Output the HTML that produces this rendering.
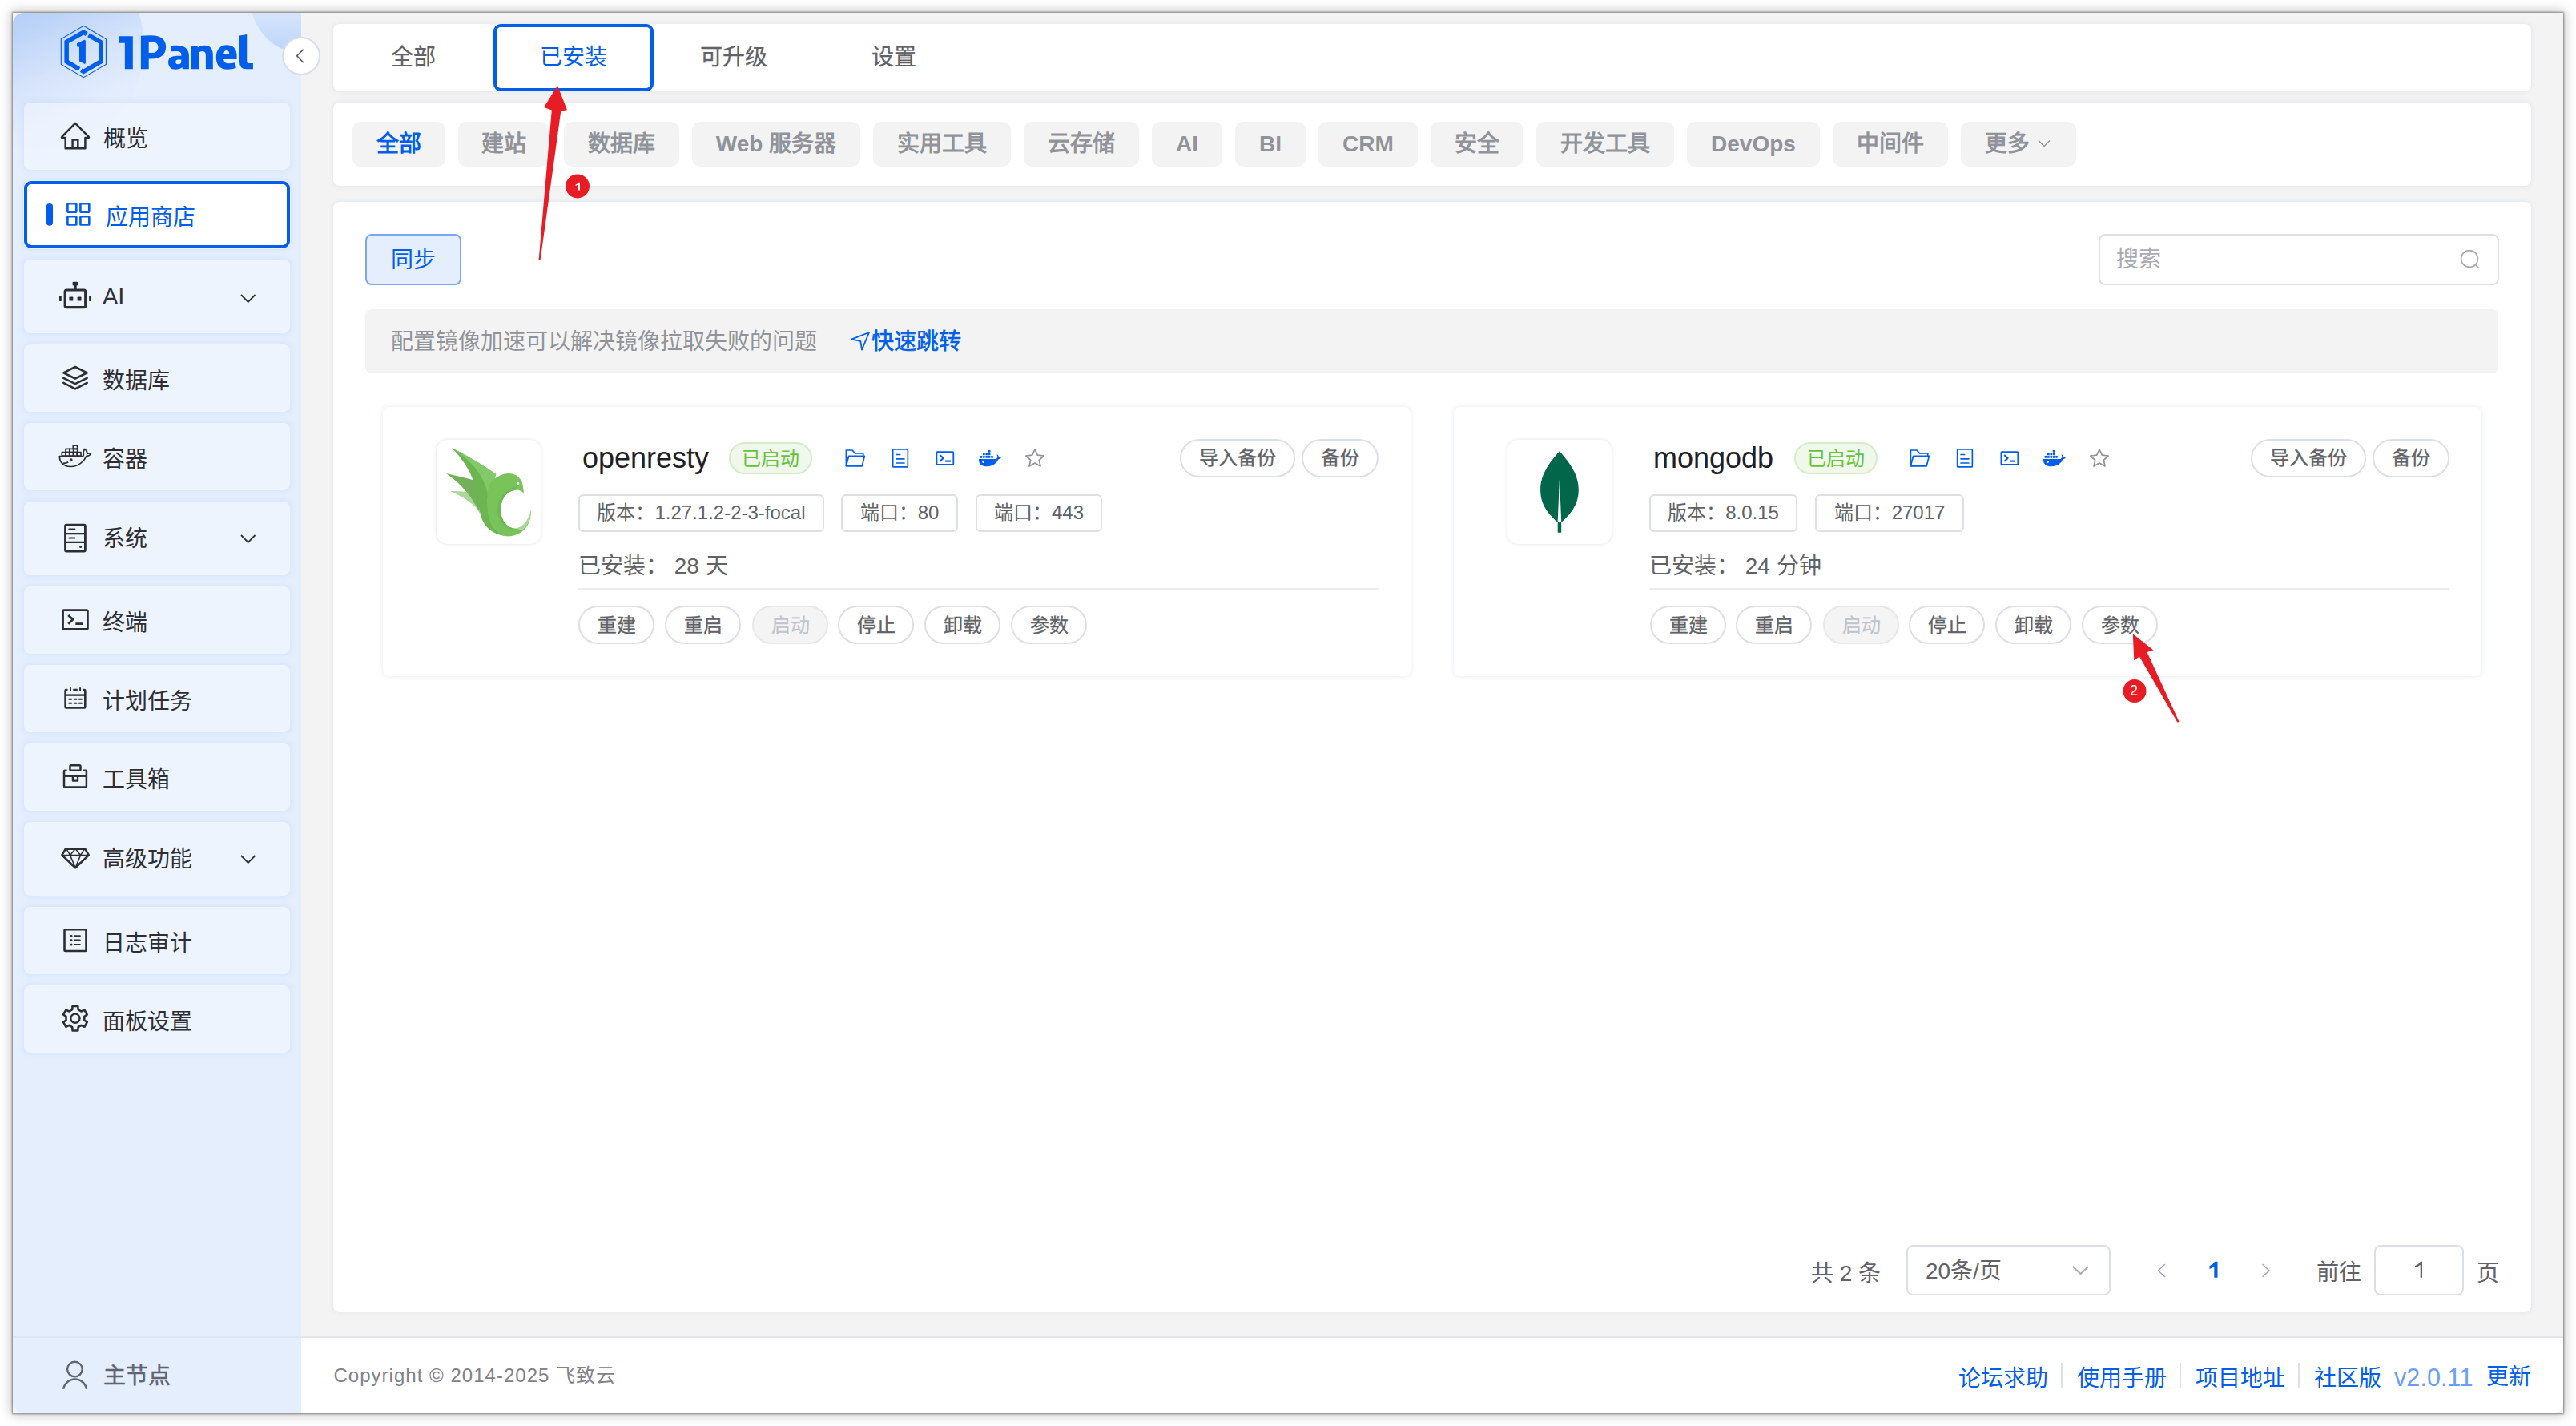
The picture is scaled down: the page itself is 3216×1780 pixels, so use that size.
<!DOCTYPE html>
<html lang="zh-CN">
<head>
<meta charset="utf-8">
<style>
*{box-sizing:border-box;margin:0;padding:0}
html,body{width:3216px;height:1780px;overflow:hidden;background:#fff}
body{position:relative;font-family:"Liberation Sans",sans-serif;color:#303133}
.a{position:absolute}
.t{position:absolute;white-space:nowrap;line-height:1}
#win{left:16px;top:16px;width:3184px;height:1748px;background:#f3f3f3;box-shadow:0 0 2px 1px rgba(0,0,0,.42),0 0 14px 2px rgba(0,0,0,.24);border-radius:0}
#side{left:16px;top:16px;width:360px;height:1748px;background:#e4eefd;border-radius:14px 0 0 14px;overflow:hidden}
.mi{position:absolute;left:30px;width:332px;border-radius:8px;background:rgba(255,255,255,.35);box-shadow:0 0 8px rgba(120,160,230,.18)}
.mt{position:absolute;left:128px;font-size:28px;line-height:1;color:#2c2e33;white-space:nowrap}
.ic{position:absolute;left:68px;width:50px;height:50px;overflow:visible}
.chev{position:absolute;left:298px;width:22px;height:14px}
.card{position:absolute;background:#fff;border-radius:8px;box-shadow:0 0 7px rgba(60,100,190,.10)}
.pill{position:absolute;top:152px;height:56px;border-radius:10px;background:#f3f3f4;padding-bottom:6px;font-size:28px;font-weight:bold;color:#909399;display:flex;align-items:center;justify-content:center;white-space:nowrap}
.btn{position:absolute;border:2px solid #dcdfe6;border-radius:24px;background:#fff;color:#606266;font-size:24px;display:flex;align-items:center;justify-content:center;white-space:nowrap;padding-bottom:4px;-webkit-text-stroke-width:0.3px}
.tagb{position:absolute;top:616.5px;height:47px;padding-bottom:6px;border:2px solid #dcdfe6;border-radius:6px;background:#fff;color:#606266;font-size:24px;display:flex;align-items:center;justify-content:center;white-space:nowrap}
</style>
</head>
<body>
<div id="win" class="a"></div>

<!-- SIDEBAR -->
<div id="side" class="a">
  <div class="a" style="left:-96px;top:-88px;width:260px;height:260px;border-radius:50%;background:linear-gradient(155deg,#a8c5f5 18%,#bcd3f8 42%,#d5e3fb 60%,#e2ecfd 76%,#e4eefd 90%)"></div>
  <div class="a" style="left:297px;top:-83px;width:134px;height:134px;border-radius:50%;background:linear-gradient(180deg,#e4eefd 40%,#bcd4f8 100%)"></div>
</div>

<!-- logo -->
<svg class="a" style="left:70px;top:28px" width="70" height="72" viewBox="0 0 70 72">
  <polygon points="34.3,4.3 62.4,20.7 62.4,52.5 34.3,68.7 6.3,52.5 6.3,20.7" fill="none" stroke="#0a5ce8" stroke-width="1.1"/>
  <path d="M39.68,12.20 L34.30,9.10 L10.40,22.70 L10.40,50.50 L27.63,60.66 L30.43,55.91 L15.92,47.35 L15.92,25.97 L34.30,15.51 L36.91,17.01 Z" fill="#005eeb"/>
  <path d="M41.94,13.50 L58.80,23.20 L58.80,50.50 L34.30,64.60 L29.95,62.04 L32.76,57.28 L34.30,58.19 L53.14,47.35 L53.14,26.35 L39.17,18.31 Z" fill="#005eeb"/>
  <path d="M26,26.3 L35.4,21.7 Q36.9,21.9 36.9,23.2 L36.9,50.5 Q36.9,52 35.4,51.8 L29,48.5 L29,30.8 L26,30.3 Z" fill="#005eeb"/>
</svg>
<svg class="a" style="left:140px;top:36px" width="190" height="60" viewBox="0 0 190 60" fill="#005eeb">
  <path d="M8.85,9.2 L25.8,9.2 L25.8,50.2 L15.86,50.2 L15.86,17.7 L8.85,17.7 Z"/>
  <path fill-rule="evenodd" d="M35.9,50.2 L35.9,8.8 Q40,8.3 48,8.3 Q58,8.3 63,12.5 Q67.1,16 67.1,23 Q67.1,30 62,34 Q57,37.6 48,37.6 L45.7,37.6 L45.7,50.2 Z M45.7,15.9 L48,15.9 Q57.5,15.9 57.5,23 Q57.5,30.1 49,30.1 L45.7,30.1 Z"/>
  <path fill-rule="evenodd" d="M73.8,21 L80,20.8 Q88,20.8 92,24 Q95.9,27.5 95.9,34 L95.9,50.2 L87.8,50.2 L87.6,48 Q84.5,50.8 79,50.8 Q74.5,50.8 72.2,48.3 Q70,45.8 70,42 Q70,37.5 73,35.5 Q76,33.8 81,33.8 L86.3,33.8 L86.3,31.5 Q86.3,28 80,28 L73.5,28.3 Z M86.3,38.5 L82,38.5 Q79.3,38.5 79.3,41.5 Q79.3,44.3 82,44.3 Q86.3,44.3 86.3,41 Z"/>
  <path d="M99,50.2 L99,21.3 L106.5,21.3 L106.8,23.5 Q109.5,20.65 115,20.65 Q120.5,20.65 123.2,23.8 Q125.8,27 125.8,33 L125.8,50.2 L116.9,50.2 L116.9,33 Q116.9,28 112.5,28 Q110,28 108,29.5 L108,50.2 Z"/>
  <path fill-rule="evenodd" d="M155.6,38 L139,38 Q139.5,43.2 145,43.2 Q149,43.2 153.7,42.2 L154.7,48.9 Q150,50.7 144,50.7 Q137,50.7 133.4,46.8 Q129.8,43 129.8,35.5 Q129.8,28 133.5,24.2 Q137.3,20.3 143,20.3 Q149,20.3 152.3,23.8 Q155.6,27.3 155.6,34 Z M139,32.1 L146.4,32.1 Q146.2,26.9 142.8,26.9 Q139.3,26.9 139,32.1 Z"/>
  <path d="M159,8.5 L168.2,7 L168.2,41 Q168.2,43.1 170.5,43.1 L175.9,43.1 L175.9,50.2 L168,50.2 Q163,50.2 161,48 Q159,45.8 159,41 Z"/>
</svg>

<!-- collapse btn -->
<div class="a" style="left:352px;top:46px;width:48px;height:48px;border-radius:50%;background:#fff;border:2px solid #dadee6"></div>
<svg class="a" style="left:367px;top:60px" width="20" height="22" viewBox="0 0 20 22"><polyline points="11.8,1.7 3.7,9.8 11.8,18.3" fill="none" stroke="#52565e" stroke-width="1.6"/></svg>

<!-- MENU ITEMS -->
<div class="mi" style="top:128px;height:84px"></div>
<div class="mi" style="top:226px;height:84px;background:#fff;border:4px solid #005eeb;border-radius:9px;box-shadow:0 0 0 1px rgba(255,255,255,.5),0 0 6px rgba(120,160,230,.25)"></div>
<div class="mi" style="top:324px;height:92px"></div>
<div class="mi" style="top:430px;height:84px"></div>
<div class="mi" style="top:528px;height:84px"></div>
<div class="mi" style="top:626px;height:92px"></div>
<div class="mi" style="top:732px;height:84px"></div>
<div class="mi" style="top:830px;height:84px"></div>
<div class="mi" style="top:928px;height:84px"></div>
<div class="mi" style="top:1026px;height:92px"></div>
<div class="mi" style="top:1132px;height:84px"></div>
<div class="mi" style="top:1230px;height:84px"></div>

<!-- menu texts -->
<div class="mt" style="top:159.5px;left:129px">概览</div>
<div class="mt" style="top:258px;left:132px;color:#005eeb">应用商店</div>
<div class="mt" style="top:355.5px;font-size:29px">AI</div>
<div class="mt" style="top:462px">数据库</div>
<div class="mt" style="top:560px">容器</div>
<div class="mt" style="top:659px">系统</div>
<div class="mt" style="top:764px">终端</div>
<div class="mt" style="top:862px">计划任务</div>
<div class="mt" style="top:960px">工具箱</div>
<div class="mt" style="top:1058.5px">高级功能</div>
<div class="mt" style="top:1164px">日志审计</div>
<div class="mt" style="top:1262px">面板设置</div>

<!-- MAIN -->
<div class="card" style="left:416px;top:30px;width:2744px;height:84px"></div>
<div class="card" style="left:416px;top:128px;width:2744px;height:104px"></div>
<div class="card" style="left:416px;top:252px;width:2744px;height:1386px"></div>

<!-- top tabs -->
<div class="t" style="left:488px;top:58px;font-size:28px;color:#606266;-webkit-text-stroke-width:0.25px">全部</div>
<div class="a" style="left:616px;top:30px;width:200px;height:84px;border:4px solid #005eeb;border-radius:9px"></div>
<div class="t" style="left:674px;top:58px;font-size:28px;color:#005eeb">已安装</div>
<div class="t" style="left:874px;top:58px;font-size:28px;color:#606266;-webkit-text-stroke-width:0.25px">可升级</div>
<div class="t" style="left:1088px;top:58px;font-size:28px;color:#606266;-webkit-text-stroke-width:0.25px">设置</div>

<!-- category pills -->
<div class="pill" style="left:440px;width:116px;color:#005eeb">全部</div>
<div class="pill" style="left:572px;width:113px">建站</div>
<div class="pill" style="left:704px;width:144px">数据库</div>
<div class="pill" style="left:864px;width:210px;padding-bottom:0">Web&nbsp;<span style="position:relative;top:-3px">服务器</span></div>
<div class="pill" style="left:1090px;width:172px">实用工具</div>
<div class="pill" style="left:1278px;width:144px">云存储</div>
<div class="pill" style="left:1438px;width:88px;padding-bottom:0">AI</div>
<div class="pill" style="left:1542px;width:88px;padding-bottom:0">BI</div>
<div class="pill" style="left:1646px;width:124px;padding-bottom:0">CRM</div>
<div class="pill" style="left:1786px;width:116px">安全</div>
<div class="pill" style="left:1918px;width:172px">开发工具</div>
<div class="pill" style="left:2106px;width:166px;padding-bottom:0">DevOps</div>
<div class="pill" style="left:2288px;width:144px">中间件</div>
<div class="pill" style="left:2448px;width:144px;justify-content:flex-start;padding-left:30px">更多</div>
<svg class="a" style="left:2542px;top:172px" width="20" height="14" viewBox="0 0 20 14"><polyline points="3,3.5 10,10.5 17,3.5" fill="none" stroke="#909399" stroke-width="1.5"/></svg>

<!-- sync button -->
<div class="a" style="left:456px;top:292px;width:120px;height:64px;border:2px solid #79a7f3;border-radius:8px;background:#e5eefd"></div>
<div class="t" style="left:488px;top:311px;font-size:28px;color:#005eeb">同步</div>

<!-- search -->
<div class="a" style="left:2620px;top:292px;width:500px;height:64px;border:2px solid #dcdfe6;border-radius:8px;background:#fff"></div>
<div class="t" style="left:2642px;top:310px;font-size:28px;color:#a8abb2">搜索</div>
<svg class="a" style="left:3068px;top:310px" width="30" height="30" viewBox="0 0 30 30"><circle cx="15" cy="13" r="10.4" fill="none" stroke="#a8abb2" stroke-width="1.7"/><line x1="22.5" y1="20.5" x2="26.8" y2="24.8" stroke="#a8abb2" stroke-width="1.7"/></svg>

<!-- alert -->
<div class="a" style="left:456px;top:386px;width:2663px;height:80px;border-radius:8px;background:#f3f3f3"></div>
<div class="t" style="left:488.3px;top:412.5px;font-size:28px;color:#909399">配置镜像加速可以解决镜像拉取失败的问题</div>
<svg class="a" style="left:1061px;top:412px" width="26" height="26" viewBox="0 0 26 26"><path d="M2,11.7 L24,3 L15,24.6 L13.3,13.8 Z" fill="none" stroke="#005eeb" stroke-width="1.8" stroke-linejoin="round"/></svg>
<div class="t" style="left:1088px;top:412.5px;font-size:28px;color:#005eeb;-webkit-text-stroke:0.6px #005eeb">快速跳转</div>

<!-- APP CARDS -->
<div class="card" style="left:478px;top:508px;width:1283px;height:336px;box-shadow:0 0 6px rgba(60,90,160,.14)"></div>
<div class="a" style="left:545px;top:549px;width:130px;height:130px;border-radius:14px;background:#fff;box-shadow:0 0 5px rgba(0,0,0,.12)"></div>
<svg class="a" style="left:540px;top:545px" width="140" height="140" viewBox="0 0 140 140">
<path d="M22,68 Q38,67.5 46,70 L57,91 Q42,76 22,68 Z" fill="#acd79a"/>
<path d="M17,46 Q36,50 54,55 L59,96 Q46,66 17,46 Z" fill="#72b05a"/>
<path d="M24,14 Q52,28 79,47 Q72,56 70,68 Q66,90 75,108 Q80,118 90,124 Q66,120 60,98 Q55,78 52,58 Q44,34 24,14 Z" fill="#6cb551"/>
<path d="M24,14 Q52,28 79.5,46.8 L76,60 Q70,64 69,72 Q62,38 24,14 Z" fill="#82ca69"/>
<path d="M69,68 Q71,52 90,46.5 Q104,44 111,55 Q113,60 114,71 Q110,66 104,66.5 Q92,68 87,80 Q82,94 89,106 Q96,116 108,115 Q117,112 123,92 Q123,110 111,119 Q101,126 90,124 Q74,118 70,100 Q67,84 69,68 Z" fill="#78c35a"/>
<path d="M104,66.5 Q92,68 87,80 Q82,94 89,106 Q96,116 108,115 Q95,118 87,108 Q78,96 83,80 Q90,66 106,62 Z" fill="#6fb954"/>
<path d="M104,114.5 Q117,112 123,92 Q122,109 112,117 Z" fill="#acd79a"/>
<circle cx="106.5" cy="58.5" r="1.7" fill="#fff"/>
</svg>
<div class="t" style="left:727px;top:554px;font-size:36px;color:#1f2023">openresty</div>
<div class="a" style="left:910px;top:552px;width:104px;height:40px;border-radius:20px;background:#eff8ea;border:2px solid #d5ecc8;color:#67c23a;font-size:24px;display:flex;align-items:center;justify-content:center;white-space:nowrap;padding-bottom:3px">已启动</div>
<svg class="a" style="left:1050px;top:555px" width="150" height="35" viewBox="0 0 150 35"><g fill="none" stroke="#005eeb" stroke-width="1.7" stroke-linejoin="round"><path d="M6.4,26.8 V7 H14 L17.5,10.8 H27.7 V14"/><path d="M9.6,14.3 H29.4 L26.2,26.8 H6.4 Z"/><rect x="64.65" y="5.85" width="18.7" height="22.1" rx="0.8"/><path d="M69,12.5 H73.7 M69,17.8 H78.9 M69,23 H78.9" stroke-linecap="round"/><rect x="119.4" y="9.1" width="20.9" height="15.9" rx="0.8" stroke-width="1.8"/><polyline points="123.8,13.5 127.6,16.9 123.8,20.4" stroke-width="2.1" stroke-linecap="round"/><path d="M130.2,20.6 H136.9" stroke-width="2.2"/></g></svg>
<svg class="a" style="left:1210px;top:550px" width="100" height="45" viewBox="0 0 100 45"><g fill="#005eeb"><path d="M12,22.9 H33.8 Q35.6,21.4 35.3,19.6 Q34.4,18 34.7,17 Q36.8,18.4 37.2,20.6 Q38.8,20.2 40,21 Q38.8,23.2 36.4,23.3 Q34,29.5 27,31.6 Q23,32.6 18.5,31.9 Q12.6,30.6 12,25 Z"/><rect x="13.6" y="19" width="2.7" height="2.7" rx=".4"/><rect x="17" y="19" width="2.7" height="2.7" rx=".4"/><rect x="20.4" y="19" width="2.7" height="2.7" rx=".4"/><rect x="23.8" y="19" width="2.7" height="2.7" rx=".4"/><rect x="27.2" y="19" width="2.7" height="2.7" rx=".4"/><rect x="17" y="15.6" width="2.7" height="2.7" rx=".4"/><rect x="20.4" y="15.6" width="2.7" height="2.7" rx=".4"/><rect x="23.8" y="15.6" width="2.7" height="2.7" rx=".4"/><rect x="23.8" y="12" width="2.7" height="2.7" rx=".4"/></g><circle cx="17.6" cy="26.6" r="1.3" fill="#fff"/><path d="M82,11 L85.3,18.2 L93.2,19 L87.3,24.3 L89,32 L82,28.1 L75,32 L76.7,24.3 L70.8,19 L78.7,18.2 Z" fill="none" stroke="#8d9096" stroke-width="1.7" stroke-linejoin="round"/></svg>
<div class="btn" style="left:1473px;top:548px;width:144px;height:48px;padding-bottom:5px">导入备份</div>
<div class="btn" style="left:1625px;top:548px;width:96px;height:48px;padding-bottom:5px">备份</div>
<div class="tagb" style="left:722px;width:307px">版本：1.27.1.2-2-3-focal</div>
<div class="tagb" style="left:1050px;width:146px">端口：80</div>
<div class="tagb" style="left:1218px;width:158px">端口：443</div>
<div class="t" style="left:722px;top:693px;font-size:28px;color:#606266">已安装：&nbsp;28 天</div>
<div class="a" style="left:722px;top:734px;width:999px;height:2px;background:#ebedf0"></div>
<div class="btn" style="left:722px;top:756px;width:95px;height:48px">重建</div>
<div class="btn" style="left:830px;top:756px;width:95px;height:48px">重启</div>
<div class="btn" style="left:939px;top:756px;width:95px;height:48px;background:#f4f4f5;border-color:#e6e8eb;color:#c0c4cc">启动</div>
<div class="btn" style="left:1046px;top:756px;width:95px;height:48px">停止</div>
<div class="btn" style="left:1154px;top:756px;width:95px;height:48px">卸载</div>
<div class="btn" style="left:1262px;top:756px;width:95px;height:48px">参数</div>
<div class="card" style="left:1815px;top:508px;width:1283px;height:336px;box-shadow:0 0 6px rgba(60,90,160,.14)"></div>
<div class="a" style="left:1882px;top:549px;width:130px;height:130px;border-radius:14px;background:#fff;box-shadow:0 0 5px rgba(0,0,0,.12)"></div>
<svg class="a" style="left:1877px;top:545px" width="140" height="140" viewBox="0 0 140 140">
<path d="M69.9,18.2 C80,30 94,45 93.8,67 C93.5,88 80,100 72.2,107 L72.2,119.8 L67.7,119.8 L67.7,107 C60,100 46.3,88 46.1,67 C46,45 60,30 69.9,18.2 Z" fill="#02674a"/>
<path d="M69.9,53.5 L72.2,106 Q70,108.5 67.7,106 Z" fill="#fff"/>
</svg>
<div class="t" style="left:2064px;top:554px;font-size:36px;color:#1f2023">mongodb</div>
<div class="a" style="left:2240px;top:552px;width:104px;height:40px;border-radius:20px;background:#eff8ea;border:2px solid #d5ecc8;color:#67c23a;font-size:24px;display:flex;align-items:center;justify-content:center;white-space:nowrap;padding-bottom:3px">已启动</div>
<svg class="a" style="left:2379px;top:555px" width="150" height="35" viewBox="0 0 150 35"><g fill="none" stroke="#005eeb" stroke-width="1.7" stroke-linejoin="round"><path d="M6.4,26.8 V7 H14 L17.5,10.8 H27.7 V14"/><path d="M9.6,14.3 H29.4 L26.2,26.8 H6.4 Z"/><rect x="64.65" y="5.85" width="18.7" height="22.1" rx="0.8"/><path d="M69,12.5 H73.7 M69,17.8 H78.9 M69,23 H78.9" stroke-linecap="round"/><rect x="119.4" y="9.1" width="20.9" height="15.9" rx="0.8" stroke-width="1.8"/><polyline points="123.8,13.5 127.6,16.9 123.8,20.4" stroke-width="2.1" stroke-linecap="round"/><path d="M130.2,20.6 H136.9" stroke-width="2.2"/></g></svg>
<svg class="a" style="left:2539px;top:550px" width="100" height="45" viewBox="0 0 100 45"><g fill="#005eeb"><path d="M12,22.9 H33.8 Q35.6,21.4 35.3,19.6 Q34.4,18 34.7,17 Q36.8,18.4 37.2,20.6 Q38.8,20.2 40,21 Q38.8,23.2 36.4,23.3 Q34,29.5 27,31.6 Q23,32.6 18.5,31.9 Q12.6,30.6 12,25 Z"/><rect x="13.6" y="19" width="2.7" height="2.7" rx=".4"/><rect x="17" y="19" width="2.7" height="2.7" rx=".4"/><rect x="20.4" y="19" width="2.7" height="2.7" rx=".4"/><rect x="23.8" y="19" width="2.7" height="2.7" rx=".4"/><rect x="27.2" y="19" width="2.7" height="2.7" rx=".4"/><rect x="17" y="15.6" width="2.7" height="2.7" rx=".4"/><rect x="20.4" y="15.6" width="2.7" height="2.7" rx=".4"/><rect x="23.8" y="15.6" width="2.7" height="2.7" rx=".4"/><rect x="23.8" y="12" width="2.7" height="2.7" rx=".4"/></g><circle cx="17.6" cy="26.6" r="1.3" fill="#fff"/><path d="M82,11 L85.3,18.2 L93.2,19 L87.3,24.3 L89,32 L82,28.1 L75,32 L76.7,24.3 L70.8,19 L78.7,18.2 Z" fill="none" stroke="#8d9096" stroke-width="1.7" stroke-linejoin="round"/></svg>
<div class="btn" style="left:2810px;top:548px;width:144px;height:48px;padding-bottom:5px">导入备份</div>
<div class="btn" style="left:2962px;top:548px;width:96px;height:48px;padding-bottom:5px">备份</div>
<div class="tagb" style="left:2059px;width:185px">版本：8.0.15</div>
<div class="tagb" style="left:2266px;width:186px">端口：27017</div>
<div class="t" style="left:2059px;top:693px;font-size:28px;color:#606266">已安装：&nbsp;24 分钟</div>
<div class="a" style="left:2059px;top:734px;width:999px;height:2px;background:#ebedf0"></div>
<div class="btn" style="left:2060px;top:756px;width:95px;height:48px">重建</div>
<div class="btn" style="left:2167px;top:756px;width:95px;height:48px">重启</div>
<div class="btn" style="left:2276px;top:756px;width:95px;height:48px;background:#f4f4f5;border-color:#e6e8eb;color:#c0c4cc">启动</div>
<div class="btn" style="left:2383px;top:756px;width:95px;height:48px">停止</div>
<div class="btn" style="left:2491px;top:756px;width:95px;height:48px">卸载</div>
<div class="btn" style="left:2599px;top:756px;width:95px;height:48px">参数</div>
<!-- /APP CARDS -->

<!-- pagination -->
<div class="t" style="left:2261px;top:1575.5px;font-size:28px;color:#606266">共 2 条</div>
<div class="a" style="left:2380px;top:1554px;width:255px;height:63px;border:2px solid #dcdfe6;border-radius:8px"></div>
<div class="t" style="left:2404px;top:1572.5px;font-size:28px;color:#606266">20条/页</div>
<svg class="a" style="left:2586px;top:1578px" width="24" height="16" viewBox="0 0 24 16"><polyline points="2,3 11.5,12 21,3" fill="none" stroke="#a8abb2" stroke-width="2"/></svg>
<svg class="a" style="left:2690px;top:1574px" width="18" height="24" viewBox="0 0 18 24"><polyline points="13,4 4.5,12 13,20" fill="none" stroke="#a8abb2" stroke-width="1.5"/></svg>
<svg class="a" style="left:0;top:0" width="3216" height="1780"><path d="M2764.3,1594.7 V1581 Q2761.5,1583 2758.5,1584 V1580.3 Q2763,1578.5 2765,1574.7 H2768.5 V1594.7 Z" fill="#005eeb"/><path d="M3021.7,1594.7 V1578.7 Q3019,1581 3015,1582.3 V1580 Q3020,1578 3022,1574.7 H3024 V1594.7 Z" fill="#606266"/></svg>
<svg class="a" style="left:2820px;top:1574px" width="18" height="24" viewBox="0 0 18 24"><polyline points="4.5,4 13,12 4.5,20" fill="none" stroke="#a8abb2" stroke-width="1.5"/></svg>
<div class="t" style="left:2892px;top:1575px;font-size:28px;color:#606266">前往</div>
<div class="a" style="left:2964px;top:1554px;width:112px;height:63px;border:2px solid #dcdfe6;border-radius:8px"></div>

<div class="t" style="left:3092px;top:1575.5px;font-size:28px;color:#606266">页</div>

<!-- footer -->
<div class="a" style="left:16px;top:1668px;width:3184px;height:2px;background:#e1e5ee"></div>
<div class="a" style="left:376px;top:1670px;width:2824px;height:94px;background:#fff;border-radius:0 0 12px 0"></div>
<svg class="a" style="left:68px;top:1690px" width="50" height="50" viewBox="0 0 50 50"><circle cx="25.4" cy="19.1" r="9.3" fill="none" stroke="#5f6470" stroke-width="2.4"/><path d="M11.2,43.7 A14.6,14.6 0 0 1 40,43.7" fill="none" stroke="#5f6470" stroke-width="2.4"/></svg>
<div class="t" style="left:129px;top:1704px;font-size:28px;color:#5f6470;-webkit-text-stroke:0.5px #5f6470">主节点</div>
<div class="t" style="left:416.5px;top:1705px;font-size:24px;color:#808287;letter-spacing:1.02px">Copyright © 2014-2025 飞致云</div>
<div class="t" style="left:2445px;top:1706.5px;font-size:28px;color:#005eeb">论坛求助</div>
<div class="a" style="left:2573px;top:1701px;width:2px;height:32px;background:#dcdfe6"></div>
<div class="t" style="left:2593px;top:1706.5px;font-size:28px;color:#005eeb">使用手册</div>
<div class="a" style="left:2721px;top:1701px;width:2px;height:32px;background:#dcdfe6"></div>
<div class="t" style="left:2741px;top:1706.5px;font-size:28px;color:#005eeb">项目地址</div>
<div class="a" style="left:2869px;top:1701px;width:2px;height:32px;background:#dcdfe6"></div>
<div class="t" style="left:2889px;top:1706.5px;font-size:28px;color:#005eeb">社区版</div>
<div class="t" style="left:2989px;top:1704px;font-size:30.5px;color:#6a9ef4;letter-spacing:0.1px">v2.0.11</div>
<div class="t" style="left:3104px;top:1704.5px;font-size:28px;color:#005eeb">更新</div>


<!-- ICONS -->
<svg class="a" style="left:70px;top:145px" width="50" height="50" viewBox="0 0 50 50"><g fill="none" stroke="#2c2e33" stroke-width="2.6" stroke-linejoin="round"><path d="M11.7,40.2 V27.1 H8 Q6.3,27.1 7.4,25.7 L24,8.9 L40.6,25.7 Q41.7,27.1 40,27.1 H36.4 V40.2 Z" stroke-width="2.5"/><path d="M20.6,40.2 V29.4 H27.3 V40.2" stroke-width="2.5"/></g></svg>
<svg class="a" style="left:50px;top:245px" width="70" height="50" viewBox="0 0 70 50"><rect x="7.9" y="8.9" width="8.1" height="27.9" rx="4" fill="#005eeb"/><g fill="none" stroke="#005eeb" stroke-width="2.6"><rect x="34.4" y="9.2" width="10.9" height="10.5" rx=".6"/><rect x="50.4" y="9.2" width="10.9" height="10.5" rx=".6"/><rect x="34.4" y="25.3" width="10.9" height="10.2" rx=".6"/><rect x="50.4" y="25.3" width="10.9" height="10.2" rx=".6"/></g></svg>
<svg class="a" style="left:68px;top:345px" width="50" height="50" viewBox="0 0 50 50"><g fill="none" stroke="#2c2e33" stroke-width="2.6" stroke-linejoin="round"><rect x="13.2" y="17" width="25.5" height="21.7" rx="2" stroke-width="3.2"/></g><g fill="#2c2e33"><rect x="24.5" y="11" width="3.2" height="5"/><rect x="22.6" y="6.8" width="6.5" height="4.8" rx="1"/><rect x="18.4" y="25.6" width="4.9" height="4.9" rx=".6"/><rect x="28.6" y="25.6" width="4.9" height="4.9" rx=".6"/><rect x="6" y="24.5" width="2.8" height="6.4" rx=".6"/><rect x="43.1" y="24.5" width="2.8" height="6.4" rx=".6"/></g></svg>
<svg class="a" style="left:68px;top:450px" width="50" height="50" viewBox="0 0 50 50"><g fill="none" stroke="#2c2e33" stroke-width="2.6" stroke-linejoin="round"><polygon points="25.9,8 40.7,15.3 25.9,22.5 11.3,15.3"/><polyline points="11.3,21.8 25.9,29.2 40.7,21.8" stroke-linecap="round"/><polyline points="11.3,27.8 25.9,35.4 40.7,27.8" stroke-linecap="round"/></g></svg>
<svg class="a" style="left:68px;top:548px" width="50" height="50" viewBox="0 0 50 50"><g fill="none" stroke="#2c2e33" stroke-width="2.6" stroke-linejoin="round"><g stroke-width="1.7"><rect x="23.3" y="8.2" width="5.3" height="4.1"/><rect x="14" y="12.3" width="4.87" height="4.2"/><rect x="18.87" y="12.3" width="4.87" height="4.2"/><rect x="23.74" y="12.3" width="4.87" height="4.2"/><rect x="9.3" y="16.5" width="4.74" height="4.6"/><rect x="14.04" y="16.5" width="4.74" height="4.6"/><rect x="18.78" y="16.5" width="4.74" height="4.6"/><rect x="23.52" y="16.5" width="4.74" height="4.6"/><rect x="28.26" y="16.5" width="4.74" height="4.6"/><path d="M6.3,21.6 C6.5,30 12,34.5 20,34.5 C30,34.5 37,28 39.8,21.4 Q43.8,21.2 45.5,18.6 Q43.5,17.4 41.2,18.3 Q40.6,14.6 37.6,12.4 Q35.4,15.6 36.4,19.4 Q36.2,21.6 34.6,21.6 Z"/><circle cx="20.7" cy="26.3" r="1.1"/><path d="M17.2,28.8 Q14,30.3 10.5,30.6" stroke-width="2"/></g></g></svg>
<svg class="a" style="left:68px;top:648px" width="50" height="50" viewBox="0 0 50 50"><g fill="none" stroke="#2c2e33" stroke-width="2.6" stroke-linejoin="round"><rect x="13.5" y="7.2" width="24.9" height="32.8" rx="1.5" stroke-width="2.8"/><path d="M13.5,18.1 H38.4 M13.5,28.9 H38.4" stroke-width="2.4"/><path d="M18.4,12.6 H25.3 M18.4,23.5 H25.3" stroke-width="2.2" stroke-linecap="round"/><circle cx="32.6" cy="34.5" r="1.5" fill="#2c2e33" stroke="none"/></g></svg>
<svg class="a" style="left:68px;top:750px" width="50" height="50" viewBox="0 0 50 50"><g fill="none" stroke="#2c2e33" stroke-width="2.6" stroke-linejoin="round"><rect x="10.5" y="11.6" width="30.9" height="23.8" rx="1.5" stroke-width="2.8"/><polyline points="17.2,18 23,23.3 17.2,28.8" stroke-width="2.8"/><path d="M26.3,28.6 H35.9" stroke-width="2.8"/></g></svg>
<svg class="a" style="left:68px;top:848px" width="50" height="50" viewBox="0 0 50 50"><g fill="none" stroke="#2c2e33" stroke-width="2.6" stroke-linejoin="round"><path d="M16.5,13 H14.6 Q13.6,13 13.6,14 V34.5 Q13.6,35.5 14.6,35.5 H37.3 Q38.3,35.5 38.3,34.5 V14 Q38.3,13 37.3,13 H35.4 M23.3,13 H28.8"/><path d="M20,10.2 V13.9 M32.1,10.2 V13.9" stroke-width="2"/><path d="M13.6,19.6 H38.3" stroke-width="2.4"/><path d="M18.2,24.7 H21.2 M24.6,24.7 H27.5 M30.8,24.7 H34 M18.2,29.8 H21.2 M24.6,29.8 H27.5 M30.8,29.8 H34" stroke-width="2" stroke-linecap="round"/></g></svg>
<svg class="a" style="left:68px;top:946px" width="50" height="50" viewBox="0 0 50 50"><g fill="none" stroke="#2c2e33" stroke-width="2.6" stroke-linejoin="round"><path d="M15.6,15.7 H13.2 Q12,15.7 12,16.9 V35.2 Q12,36.4 13.2,36.4 H38.7 Q39.9,36.4 39.9,35.2 V16.9 Q39.9,15.7 38.7,15.7 H36.1" stroke-width="2.5"/><rect x="19.45" y="9.35" width="13.1" height="6.4" rx="1.5" stroke-width="2.5"/><path d="M12,22.8 H39.9" stroke-width="2.3"/><path d="M22.85,22.8 V28.6 H29.05 V22.8" stroke-width="2.3"/></g></svg>
<svg class="a" style="left:68px;top:1046px" width="50" height="50" viewBox="0 0 50 50"><g fill="none" stroke="#2c2e33" stroke-width="2.6" stroke-linejoin="round"><polygon points="13.9,13.6 38.2,13.6 42.8,21.4 26.1,37.2 9.4,21.4"/><g stroke-width="1.5"><path d="M9.4,21.4 H42.8 M14.9,13.6 L19.5,21.4 L26.1,13.6 L32.6,21.4 L37.5,13.6 M19.5,21.4 L26.1,37.2 L32.6,21.4"/></g></g></svg>
<svg class="a" style="left:68px;top:1148px" width="50" height="50" viewBox="0 0 50 50"><g fill="none" stroke="#2c2e33" stroke-width="2.6" stroke-linejoin="round"><rect x="12.5" y="12.2" width="27" height="26.8" rx="1" stroke-width="2.6"/><path d="M25.2,20.2 H31.8 M25.2,25.6 H31.8 M25.2,30.9 H31.8" stroke-width="2" stroke-linecap="round"/><g fill="#2c2e33" stroke="none"><circle cx="21" cy="20.2" r="1.5"/><circle cx="21" cy="25.6" r="1.5"/><circle cx="21" cy="30.9" r="1.5"/></g></g></svg>
<svg class="a" style="left:68px;top:1247px" width="50" height="50" viewBox="0 0 50 50"><g fill="none" stroke="#2c2e33" stroke-width="2.6" stroke-linejoin="round"><path d="M22.22,13.20 L22.52,8.97 L29.28,8.97 L29.58,13.20 L33.59,15.51 L37.40,13.66 L40.78,19.51 L37.27,21.89 L37.27,26.51 L40.78,28.89 L37.40,34.74 L33.59,32.89 L29.58,35.20 L29.28,39.43 L22.52,39.43 L22.22,35.20 L18.21,32.89 L14.40,34.74 L11.02,28.89 L14.53,26.51 L14.53,21.89 L11.02,19.51 L14.40,13.66 L18.21,15.51 Z" stroke-width="2.6"/><circle cx="25.9" cy="24.2" r="5.6" stroke-width="2.4"/></g></svg>
<svg class="a" style="left:299px;top:365.5px" width="22" height="14" viewBox="0 0 22 14"><polyline points="2,2 10.75,11 19.5,2" fill="none" stroke="#303133" stroke-width="1.8"/></svg>
<svg class="a" style="left:299px;top:665.5px" width="22" height="14" viewBox="0 0 22 14"><polyline points="2,2 10.75,11 19.5,2" fill="none" stroke="#303133" stroke-width="1.8"/></svg>
<svg class="a" style="left:299px;top:1065.5px" width="22" height="14" viewBox="0 0 22 14"><polyline points="2,2 10.75,11 19.5,2" fill="none" stroke="#303133" stroke-width="1.8"/></svg>
<svg class="a" style="left:0;top:0" width="3216" height="1780" viewBox="0 0 3216 1780" style="pointer-events:none"><polygon points="672.6,324.5 688.8,137.5 679,134 696,106.7 708,137.3 700.3,138.5 674.6,324.5" fill="#e81c24"/><circle cx="721" cy="232.5" r="15" fill="#e81c24"/><polygon points="2662.8,791.3 2688.5,811.6 2680.5,814 2720.6,901 2718.3,901.6 2671,819.5 2664.3,824.6" fill="#e81c24"/><circle cx="2665" cy="862.4" r="14.5" fill="#e81c24"/></svg>
<svg class="a" style="left:0;top:0" width="3216" height="1780"><path d="M721.9,237.4 V230.2 Q720.5,231.3 718.6,231.9 V230.6 Q721,229.6 722.3,227.7 H723.9 V237.4 Z" fill="#fff"/></svg>
<div class="t" style="left:2659px;top:853px;font-size:18px;color:#fff">2</div>
<!-- /ICONS -->
</body>
</html>
